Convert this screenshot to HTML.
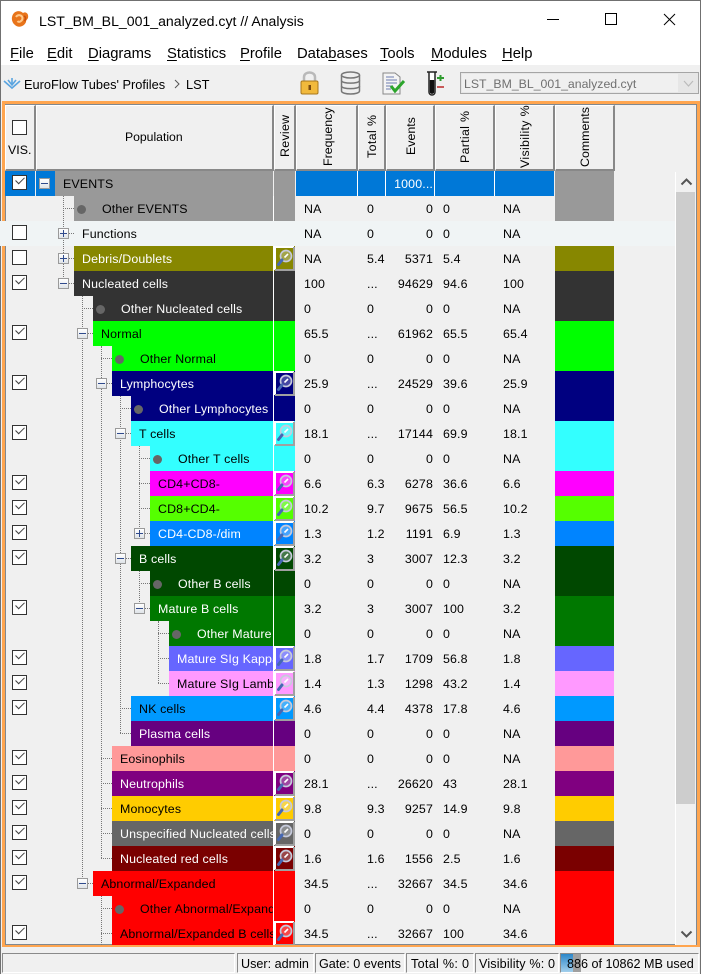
<!DOCTYPE html>
<html><head><meta charset="utf-8"><style>
html,body{margin:0;padding:0;width:701px;height:974px;overflow:hidden;background:#f0f0f0;font:12.4px "Liberation Sans",sans-serif;color:#000}
div,span,i,b,u{position:absolute;font-style:normal;font-weight:normal;white-space:nowrap}
u{position:static;text-decoration:underline}
.m{top:45px;font-size:14.8px;color:#000;line-height:18px}
.m u{text-decoration-thickness:1px;text-underline-offset:2px}
.h{top:105px;background:#f0f0f0;border:1px solid #fff;border-right:2px solid #888;border-bottom:2px solid #888;box-sizing:border-box;height:66px}
.v{writing-mode:vertical-rl;transform:rotate(180deg);line-height:14px;font-size:12.4px}
.r{left:0;width:676px;height:25px;line-height:27px;letter-spacing:.14px}
.c{left:12px;top:4px;width:13px;height:13px;border:1.5px solid #333;background:#fff}
.k:after{content:"";position:absolute;left:3px;top:1px;width:7px;height:4px;border-left:1.5px solid #444;border-bottom:1.5px solid #444;transform:rotate(-45deg) scaleX(1.1)}
.e{top:7px;width:9px;height:9px;border:1px solid #9a9a9a;background:linear-gradient(#fff,#dfe3e8)}
.e:before{content:"";position:absolute;left:1px;top:4px;width:7px;height:1px;background:#2f4a8c}
.p:after{content:"";position:absolute;left:4px;top:1px;width:1px;height:7px;background:#2f4a8c}
.b{top:0;height:25px;left:0;overflow:hidden;padding-left:8px;box-sizing:border-box;right:auto}
.o{padding-left:28px}
.o:before{content:"";position:absolute;left:3px;top:9px;width:9px;height:9px;border-radius:5px;background:#666}
.w{color:#fff}
.g{left:274px;top:0;width:21px;height:25px}
.f{left:304px}.t{left:367px}.n{left:386px;width:47px;text-align:right}.a{left:443px}.s{left:503px}
.q{left:555px;top:0;width:59px;height:25px}
.x{left:273px;top:0;width:1px;height:25px;background:#fff}
.l{border-left:1px dotted #777;width:0}
.d{border-top:1px dotted #777;height:0}
svg.z{position:absolute;left:274px;top:0;width:21px;height:25px}
.st{top:953px;height:20px;line-height:21px;border:1px solid #8a8a8a;border-right-color:#fff;border-bottom-color:#fff;box-sizing:border-box;background:#f0f0f0;overflow:hidden;font-size:12.6px}
</style></head><body>
<svg width="0" height="0" style="position:absolute"><defs><symbol id="mg" viewBox="0 0 21 25"><path d="M1 24V1H20" fill="none" stroke="#fff" stroke-width="2"/><path d="M20 1V24H1" fill="none" stroke="#a0a0a0" stroke-width="2"/><circle cx="12" cy="10" r="5.500" fill="#e4ecf6" fill-opacity=".3" stroke="#c6cadb" stroke-width="1.700"/><path d="M8 14L4.500 18.500" stroke="#4668b4" stroke-width="3" stroke-linecap="round"/><path d="M10.500 11.500L14 8" stroke="#fff" stroke-width="1.600"/></symbol></defs></svg>

<!-- window -->
<div style="left:0;top:0;width:701px;height:65px;background:#fff"></div>
<div style="left:0;top:0;width:701px;height:1px;background:#707070"></div>
<div style="left:0;top:0;width:1px;height:974px;background:#707070"></div>
<div style="left:700px;top:0;width:1px;height:974px;background:#707070"></div>
<svg style="position:absolute;left:11px;top:10px" width="18" height="18" viewBox="0 0 18 18"><path d="M3 3C6 0 10 1 12 3C15 1 18 4 17 8C16 10 15 10 15 12C13 17 7 18 4 15C0 12 0 6 3 3Z" fill="#e8741a"/><path d="M5 7C7 4 11 5 11.500 8C11.500 11 8 13 6.500 11" fill="none" stroke="#ffc98a" stroke-width="2"/><path d="M13 6C15 7 15 9 13.500 11" fill="none" stroke="#c9500e" stroke-width="1.500"/></svg>
<div style="left:39px;top:11px;font-size:14.1px;line-height:20px">LST_BM_BL_001_analyzed.cyt // Analysis</div>
<div style="left:547px;top:19px;width:12px;height:1px;background:#000"></div>
<div style="left:605px;top:13px;width:10px;height:10px;border:1px solid #000"></div>
<svg style="position:absolute;left:663px;top:13px" width="13" height="13"><path d="M1 1L12 12M12 1L1 12" stroke="#000" stroke-width="1"/></svg>
<div class="m" style="left:10px"><u>F</u>ile</div>
<div class="m" style="left:47px"><u>E</u>dit</div>
<div class="m" style="left:88px"><u>D</u>iagrams</div>
<div class="m" style="left:167px"><u>S</u>tatistics</div>
<div class="m" style="left:240px"><u>P</u>rofile</div>
<div class="m" style="left:297px">Data<u>b</u>ases</div>
<div class="m" style="left:380px"><u>T</u>ools</div>
<div class="m" style="left:431px"><u>M</u>odules</div>
<div class="m" style="left:502px"><u>H</u>elp</div>

<!-- toolbar -->
<svg style="position:absolute;left:3px;top:77px" width="18" height="14" viewBox="0 0 18 14"><path d="M1 4L9 11L17 4M5 3L9 8L13 3M9 1V8" fill="none" stroke="#5ba5e0" stroke-width="1.600"/></svg>
<div style="left:24px;top:76px;line-height:17px;font-size:12.8px">EuroFlow Tubes' Profiles</div>
<svg style="position:absolute;left:173px;top:79px" width="8" height="10"><path d="M2 1L6 5L2 9" fill="none" stroke="#555" stroke-width="1"/></svg>
<div style="left:186px;top:76px;line-height:17px;font-size:12.8px">LST</div>
<svg style="position:absolute;left:299px;top:70px" width="22" height="26" viewBox="0 0 22 26"><path d="M5 12V7C5 1 16 1 16 7V12" fill="none" stroke="#b9b9b9" stroke-width="2.500"/><rect x="2" y="11" width="17" height="13" rx="1.500" fill="#f1b93c" stroke="#a8781e"/><rect x="9.500" y="15" width="2.500" height="5" fill="#7a4a10"/></svg>
<svg style="position:absolute;left:340px;top:71px" width="21" height="24" viewBox="0 0 21 24"><path d="M1.500 4V20C1.500 24 19.500 24 19.500 20V4" fill="#eee" stroke="#777" stroke-width="1.500"/><ellipse cx="10.500" cy="4" rx="9" ry="3" fill="#eee" stroke="#777" stroke-width="1.500"/><path d="M1.500 9.500C1.500 13 19.500 13 19.500 9.500M1.500 15C1.500 18.500 19.500 18.500 19.500 15" fill="none" stroke="#777" stroke-width="1.500"/></svg>
<svg style="position:absolute;left:382px;top:72px" width="24" height="23" viewBox="0 0 24 23"><path d="M1 1H13L18 5V22H1Z" fill="#f4f4f4" stroke="#888"/><path d="M4 5H12M4 8H15M4 11H15M4 14H11M4 17H9" stroke="#6c7cb0" stroke-width="1"/><path d="M9 14L13 19L22 9" fill="none" stroke="#2ca52c" stroke-width="3"/></svg>
<svg style="position:absolute;left:426px;top:71px" width="20" height="25" viewBox="0 0 20 25"><path d="M1 1H11M3 1V21C3 25 9 25 9 21V1" fill="#fff" stroke="#222" stroke-width="1.500"/><path d="M3.800 9H8.200V21C8.200 23.500 3.800 23.500 3.800 21Z" fill="#111"/><path d="M11 7H18M14.500 4V10" stroke="#2f9c2f" stroke-width="2"/><path d="M11 16H18" stroke="#c85a5a" stroke-width="2"/></svg>
<div style="left:460px;top:72px;width:239px;height:22px;background:#e6e6e6;border:1px solid #a5a5a5;box-sizing:border-box"></div>
<div style="left:462px;top:74px;width:216px;height:18px;background:#f0f0f0"></div>
<div style="left:464px;top:76px;line-height:17px;font-size:12.3px;color:#707070">LST_BM_BL_001_analyzed.cyt</div>
<svg style="position:absolute;left:683px;top:80px" width="12" height="8"><path d="M1 1L5.500 6L10 1" fill="none" stroke="#bbb" stroke-width="1.200"/></svg>

<!-- frame -->
<div style="left:2px;top:101px;width:698px;height:846px;box-sizing:border-box;border:3px solid #ffa54f"></div>
<div style="left:5px;top:104px;width:692px;height:841px;box-sizing:border-box;border:1px solid #808890;background:#f0f0f0"></div>

<!-- headers -->
<div class="h" style="left:5px;width:31px"></div><i class="c" style="left:12px;top:120px;width:13px;height:13px"></i><div style="left:8px;top:143px;line-height:14px">VIS.</div>
<div class="h" style="left:36px;width:238px"></div><div style="left:125px;top:130px;line-height:15px;font-size:12.2px">Population</div>
<div class="h" style="left:274px;width:22px"></div><div class="v" style="left:278px;top:116px;height:41px;letter-spacing:.3px">Review</div>
<div class="h" style="left:296px;width:62px"></div><div class="v" style="left:321px;top:107px;height:59px">Frequency</div>
<div class="h" style="left:358px;width:28px"></div><div class="v" style="left:365px;top:114px;height:44px;letter-spacing:.4px">Total %</div>
<div class="h" style="left:386px;width:49px"></div><div class="v" style="left:404px;top:118px;height:37px">Events</div>
<div class="h" style="left:435px;width:60px"></div><div class="v" style="left:458px;top:110px;height:53px;letter-spacing:.3px">Partial %</div>
<div class="h" style="left:495px;width:60px"></div><div class="v" style="left:518px;top:106px;height:62px;letter-spacing:.33px">Visibility %</div>
<div class="h" style="left:555px;width:60px"></div><div class="v" style="left:578px;top:107px;height:60px">Comments</div>

<!-- rows -->
<div class="r" style="top:171px"><b style="left:5px;top:0;width:30px;height:25px;background:#0078d7"></b><b style="left:36px;top:0;width:19px;height:25px;background:#0078d7"></b><b style="left:55px;top:0;width:218px;height:25px;background:#999"></b><b class="g" style="background:#999"></b><b style="left:296px;top:0;width:258px;height:25px;background:#0078d7"></b><b style="left:357px;top:0;width:1px;height:25px;background:#fff"></b><b style="left:385px;top:0;width:1px;height:25px;background:#fff"></b><b style="left:434px;top:0;width:1px;height:25px;background:#fff"></b><b style="left:494px;top:0;width:1px;height:25px;background:#fff"></b><b class="q" style="background:#999"></b><i class="c k"></i><i class="e" style="left:39px"></i><span style="left:63px">EVENTS</span><span class="n w">1000...</span></div>
<div class="r" style="top:196px"><b class="b o" style="left:74px;width:199px;background:#999">Other EVENTS</b><b class="x"></b><b class="g" style="background:#999"></b><span class="f">NA</span><span class="t">0</span><span class="n">0</span><span class="a">0</span><span class="s">NA</span><b class="q" style="background:#999"></b></div>
<div class="r" style="top:221px;background:#f0f4f5"><i class="c"></i><span style="left:82px">Functions</span><span class="f">NA</span><span class="t">0</span><span class="n">0</span><span class="a">0</span><span class="s">NA</span></div>
<div class="r" style="top:246px"><i class="c"></i><b class="b w" style="left:74px;width:199px;background:#878700">Debris/Doublets</b><b class="x"></b><b class="g" style="background:#878700"></b><svg class="z"><use href="#mg"/></svg><span class="f">NA</span><span class="t">5.4</span><span class="n">5371</span><span class="a">5.4</span><span class="s">NA</span><b class="q" style="background:#878700"></b></div>
<div class="r" style="top:271px"><i class="c k"></i><b class="b w" style="left:74px;width:199px;background:#333">Nucleated cells</b><b class="x"></b><b class="g" style="background:#333"></b><span class="f">100</span><span class="t">...</span><span class="n">94629</span><span class="a">94.6</span><span class="s">100</span><b class="q" style="background:#333"></b></div>
<div class="r" style="top:296px"><b class="b o w" style="left:93px;width:180px;background:#333">Other Nucleated cells</b><b class="x"></b><b class="g" style="background:#333"></b><span class="f">0</span><span class="t">0</span><span class="n">0</span><span class="a">0</span><span class="s">NA</span><b class="q" style="background:#333"></b></div>
<div class="r" style="top:321px"><i class="c k"></i><b class="b" style="left:93px;width:180px;background:#0f0">Normal</b><b class="x"></b><b class="g" style="background:#0f0"></b><span class="f">65.5</span><span class="t">...</span><span class="n">61962</span><span class="a">65.5</span><span class="s">65.4</span><b class="q" style="background:#0f0"></b></div>
<div class="r" style="top:346px"><b class="b o" style="left:112px;width:161px;background:#0f0">Other Normal</b><b class="x"></b><b class="g" style="background:#0f0"></b><span class="f">0</span><span class="t">0</span><span class="n">0</span><span class="a">0</span><span class="s">NA</span><b class="q" style="background:#0f0"></b></div>
<div class="r" style="top:371px"><i class="c k"></i><b class="b w" style="left:112px;width:161px;background:#000080">Lymphocytes</b><b class="x"></b><b class="g" style="background:#000080"></b><svg class="z"><use href="#mg"/></svg><span class="f">25.9</span><span class="t">...</span><span class="n">24529</span><span class="a">39.6</span><span class="s">25.9</span><b class="q" style="background:#000080"></b></div>
<div class="r" style="top:396px"><b class="b o w" style="left:131px;width:142px;background:#000080">Other Lymphocytes</b><b class="x"></b><b class="g" style="background:#000080"></b><span class="f">0</span><span class="t">0</span><span class="n">0</span><span class="a">0</span><span class="s">NA</span><b class="q" style="background:#000080"></b></div>
<div class="r" style="top:421px"><i class="c k"></i><b class="b" style="left:131px;width:142px;background:#3ff">T cells</b><b class="x"></b><b class="g" style="background:#3ff"></b><svg class="z"><use href="#mg"/></svg><span class="f">18.1</span><span class="t">...</span><span class="n">17144</span><span class="a">69.9</span><span class="s">18.1</span><b class="q" style="background:#3ff"></b></div>
<div class="r" style="top:446px"><b class="b o" style="left:150px;width:123px;background:#3ff">Other T cells</b><b class="x"></b><b class="g" style="background:#3ff"></b><span class="f">0</span><span class="t">0</span><span class="n">0</span><span class="a">0</span><span class="s">NA</span><b class="q" style="background:#3ff"></b></div>
<div class="r" style="top:471px"><i class="c k"></i><b class="b" style="left:150px;width:123px;background:#f0f">CD4+CD8-</b><b class="x"></b><b class="g" style="background:#f0f"></b><svg class="z"><use href="#mg"/></svg><span class="f">6.6</span><span class="t">6.3</span><span class="n">6278</span><span class="a">36.6</span><span class="s">6.6</span><b class="q" style="background:#f0f"></b></div>
<div class="r" style="top:496px"><i class="c k"></i><b class="b" style="left:150px;width:123px;background:#5f0">CD8+CD4-</b><b class="x"></b><b class="g" style="background:#5f0"></b><svg class="z"><use href="#mg"/></svg><span class="f">10.2</span><span class="t">9.7</span><span class="n">9675</span><span class="a">56.5</span><span class="s">10.2</span><b class="q" style="background:#5f0"></b></div>
<div class="r" style="top:521px"><i class="c k"></i><b class="b w" style="left:150px;width:123px;background:#0084ff">CD4-CD8-/dim</b><b class="x"></b><b class="g" style="background:#0084ff"></b><svg class="z"><use href="#mg"/></svg><span class="f">1.3</span><span class="t">1.2</span><span class="n">1191</span><span class="a">6.9</span><span class="s">1.3</span><b class="q" style="background:#0084ff"></b></div>
<div class="r" style="top:546px"><i class="c k"></i><b class="b w" style="left:131px;width:142px;background:#004800">B cells</b><b class="x"></b><b class="g" style="background:#004800"></b><svg class="z"><use href="#mg"/></svg><span class="f">3.2</span><span class="t">3</span><span class="n">3007</span><span class="a">12.3</span><span class="s">3.2</span><b class="q" style="background:#004800"></b></div>
<div class="r" style="top:571px"><b class="b o w" style="left:150px;width:123px;background:#004800">Other B cells</b><b class="x"></b><b class="g" style="background:#004800"></b><span class="f">0</span><span class="t">0</span><span class="n">0</span><span class="a">0</span><span class="s">NA</span><b class="q" style="background:#004800"></b></div>
<div class="r" style="top:596px"><i class="c k"></i><b class="b w" style="left:150px;width:123px;background:#007800">Mature B cells</b><b class="x"></b><b class="g" style="background:#007800"></b><span class="f">3.2</span><span class="t">3</span><span class="n">3007</span><span class="a">100</span><span class="s">3.2</span><b class="q" style="background:#007800"></b></div>
<div class="r" style="top:621px"><b class="b o w" style="left:169px;width:104px;background:#007800">Other Mature B cells</b><b class="x"></b><b class="g" style="background:#007800"></b><span class="f">0</span><span class="t">0</span><span class="n">0</span><span class="a">0</span><span class="s">NA</span><b class="q" style="background:#007800"></b></div>
<div class="r" style="top:646px"><i class="c k"></i><b class="b w" style="left:169px;width:104px;background:#6666ff">Mature SIg Kappa</b><b class="x"></b><b class="g" style="background:#6666ff"></b><svg class="z"><use href="#mg"/></svg><span class="f">1.8</span><span class="t">1.7</span><span class="n">1709</span><span class="a">56.8</span><span class="s">1.8</span><b class="q" style="background:#6666ff"></b></div>
<div class="r" style="top:671px"><i class="c k"></i><b class="b" style="left:169px;width:104px;background:#ff99ff">Mature SIg Lambda</b><b class="x"></b><b class="g" style="background:#ff99ff"></b><svg class="z"><use href="#mg"/></svg><span class="f">1.4</span><span class="t">1.3</span><span class="n">1298</span><span class="a">43.2</span><span class="s">1.4</span><b class="q" style="background:#ff99ff"></b></div>
<div class="r" style="top:696px"><i class="c k"></i><b class="b" style="left:131px;width:142px;background:#0099ff">NK cells</b><b class="x"></b><b class="g" style="background:#0099ff"></b><svg class="z"><use href="#mg"/></svg><span class="f">4.6</span><span class="t">4.4</span><span class="n">4378</span><span class="a">17.8</span><span class="s">4.6</span><b class="q" style="background:#0099ff"></b></div>
<div class="r" style="top:721px"><b class="b w" style="left:131px;width:142px;background:#660080">Plasma cells</b><b class="x"></b><b class="g" style="background:#660080"></b><span class="f">0</span><span class="t">0</span><span class="n">0</span><span class="a">0</span><span class="s">NA</span><b class="q" style="background:#660080"></b></div>
<div class="r" style="top:746px"><i class="c k"></i><b class="b" style="left:112px;width:161px;background:#ff9999">Eosinophils</b><b class="x"></b><b class="g" style="background:#ff9999"></b><span class="f">0</span><span class="t">0</span><span class="n">0</span><span class="a">0</span><span class="s">NA</span><b class="q" style="background:#ff9999"></b></div>
<div class="r" style="top:771px"><i class="c k"></i><b class="b w" style="left:112px;width:161px;background:#800080">Neutrophils</b><b class="x"></b><b class="g" style="background:#800080"></b><svg class="z"><use href="#mg"/></svg><span class="f">28.1</span><span class="t">...</span><span class="n">26620</span><span class="a">43</span><span class="s">28.1</span><b class="q" style="background:#800080"></b></div>
<div class="r" style="top:796px"><i class="c k"></i><b class="b" style="left:112px;width:161px;background:#ffcc00">Monocytes</b><b class="x"></b><b class="g" style="background:#ffcc00"></b><svg class="z"><use href="#mg"/></svg><span class="f">9.8</span><span class="t">9.3</span><span class="n">9257</span><span class="a">14.9</span><span class="s">9.8</span><b class="q" style="background:#ffcc00"></b></div>
<div class="r" style="top:821px"><i class="c k"></i><b class="b w" style="left:112px;width:161px;background:#666">Unspecified Nucleated cells</b><b class="x"></b><b class="g" style="background:#666"></b><svg class="z"><use href="#mg"/></svg><span class="f">0</span><span class="t">0</span><span class="n">0</span><span class="a">0</span><span class="s">NA</span><b class="q" style="background:#666"></b></div>
<div class="r" style="top:846px"><i class="c k"></i><b class="b w" style="left:112px;width:161px;background:#7a0000">Nucleated red cells</b><b class="x"></b><b class="g" style="background:#7a0000"></b><svg class="z"><use href="#mg"/></svg><span class="f">1.6</span><span class="t">1.6</span><span class="n">1556</span><span class="a">2.5</span><span class="s">1.6</span><b class="q" style="background:#7a0000"></b></div>
<div class="r" style="top:871px"><i class="c k"></i><b class="b" style="left:93px;width:180px;background:#f00">Abnormal/Expanded</b><b class="x"></b><b class="g" style="background:#f00"></b><span class="f">34.5</span><span class="t">...</span><span class="n">32667</span><span class="a">34.5</span><span class="s">34.6</span><b class="q" style="background:#f00"></b></div>
<div class="r" style="top:896px"><b class="b o" style="left:112px;width:161px;background:#f00">Other Abnormal/Expanded</b><b class="x"></b><b class="g" style="background:#f00"></b><span class="f">0</span><span class="t">0</span><span class="n">0</span><span class="a">0</span><span class="s">NA</span><b class="q" style="background:#f00"></b></div>
<div class="r" style="top:921px;height:24px;overflow:hidden"><i class="c k"></i><b class="b" style="left:112px;width:161px;background:#f00">Abnormal/Expanded B cells</b><b class="x"></b><b class="g" style="background:#f00"></b><svg class="z"><use href="#mg"/></svg><span class="f">34.5</span><span class="t">...</span><span class="n">32667</span><span class="a">100</span><span class="s">34.6</span><b class="q" style="background:#f00"></b></div>

<!-- tree lines -->
<div class="l" style="left:63px;top:196px;height:87px"></div>
<div class="d" style="left:63px;top:208px;width:11px"></div>
<div class="d" style="left:68px;top:233px;width:6px"></div>
<div class="d" style="left:68px;top:258px;width:6px"></div>
<div class="d" style="left:68px;top:283px;width:6px"></div>
<div class="l" style="left:82px;top:296px;height:587px"></div>
<div class="d" style="left:82px;top:308px;width:11px"></div>
<div class="d" style="left:87px;top:333px;width:6px"></div>
<div class="d" style="left:87px;top:883px;width:6px"></div>
<div class="l" style="left:101px;top:346px;height:512px"></div>
<div class="d" style="left:101px;top:358px;width:11px"></div>
<div class="d" style="left:106px;top:383px;width:6px"></div>
<div class="d" style="left:101px;top:758px;width:11px"></div>
<div class="d" style="left:101px;top:783px;width:11px"></div>
<div class="d" style="left:101px;top:808px;width:11px"></div>
<div class="d" style="left:101px;top:833px;width:11px"></div>
<div class="d" style="left:101px;top:858px;width:11px"></div>
<div class="l" style="left:101px;top:896px;height:49px"></div>
<div class="d" style="left:101px;top:908px;width:11px"></div>
<div class="d" style="left:101px;top:933px;width:11px"></div>
<div class="l" style="left:120px;top:396px;height:337px"></div>
<div class="d" style="left:120px;top:408px;width:11px"></div>
<div class="d" style="left:125px;top:433px;width:6px"></div>
<div class="d" style="left:125px;top:558px;width:6px"></div>
<div class="d" style="left:120px;top:708px;width:11px"></div>
<div class="d" style="left:120px;top:733px;width:11px"></div>
<div class="l" style="left:139px;top:446px;height:87px"></div>
<div class="d" style="left:139px;top:458px;width:11px"></div>
<div class="d" style="left:139px;top:483px;width:11px"></div>
<div class="d" style="left:139px;top:508px;width:11px"></div>
<div class="d" style="left:144px;top:533px;width:6px"></div>
<div class="l" style="left:139px;top:571px;height:37px"></div>
<div class="d" style="left:139px;top:583px;width:11px"></div>
<div class="d" style="left:144px;top:608px;width:6px"></div>
<div class="l" style="left:158px;top:621px;height:62px"></div>
<div class="d" style="left:158px;top:633px;width:11px"></div>
<div class="d" style="left:158px;top:658px;width:11px"></div>
<div class="d" style="left:158px;top:683px;width:11px"></div>

<!-- expanders -->
<i class="e p" style="left:58px;top:228px"></i>
<i class="e p" style="left:58px;top:253px"></i>
<i class="e" style="left:58px;top:278px"></i>
<i class="e" style="left:77px;top:328px"></i>
<i class="e" style="left:96px;top:378px"></i>
<i class="e" style="left:115px;top:428px"></i>
<i class="e p" style="left:134px;top:528px"></i>
<i class="e" style="left:115px;top:553px"></i>
<i class="e" style="left:134px;top:603px"></i>
<i class="e" style="left:77px;top:878px"></i>

<!-- scrollbar -->
<div style="left:675px;top:172px;width:1px;height:773px;background:#fff"></div>
<div style="left:676px;top:172px;width:20px;height:773px;background:#f0f0f0"></div>
<div style="left:676px;top:192px;width:19px;height:612px;background:#cdcdcd"></div>
<svg style="position:absolute;left:680px;top:178px" width="13" height="8"><path d="M1.500 6.500L6.500 1.500L11.500 6.500" fill="none" stroke="#555" stroke-width="2"/></svg>
<svg style="position:absolute;left:680px;top:930px" width="13" height="8"><path d="M1.500 1.500L6.500 6.500L11.500 1.500" fill="none" stroke="#555" stroke-width="2"/></svg>

<!-- status -->
<div style="left:3px;top:947px;width:697px;height:1px;background:#f0f0f0"></div>
<div class="st" style="left:2px;width:233px"></div>
<div class="st" style="left:237px;width:77px;padding-left:3px">User: admin</div>
<div class="st" style="left:315px;width:90px;padding-left:3px">Gate: 0 events</div>
<div class="st" style="left:406px;width:68px;padding-left:4px;letter-spacing:.3px">Total %: 0</div>
<div class="st" style="left:475px;width:84px;padding-left:3px;letter-spacing:.15px">Visibility %: 0</div>
<div class="st" style="left:560px;width:139px"><div style="left:0;top:0;width:12px;height:19px;background:linear-gradient(#2c87c9,#a9d3ee)"></div><div style="left:12px;top:0;width:8px;height:19px;background:#a0a0a0"></div><div style="left:6px;top:0">886 of 10862 MB used</div></div>
</body></html>
